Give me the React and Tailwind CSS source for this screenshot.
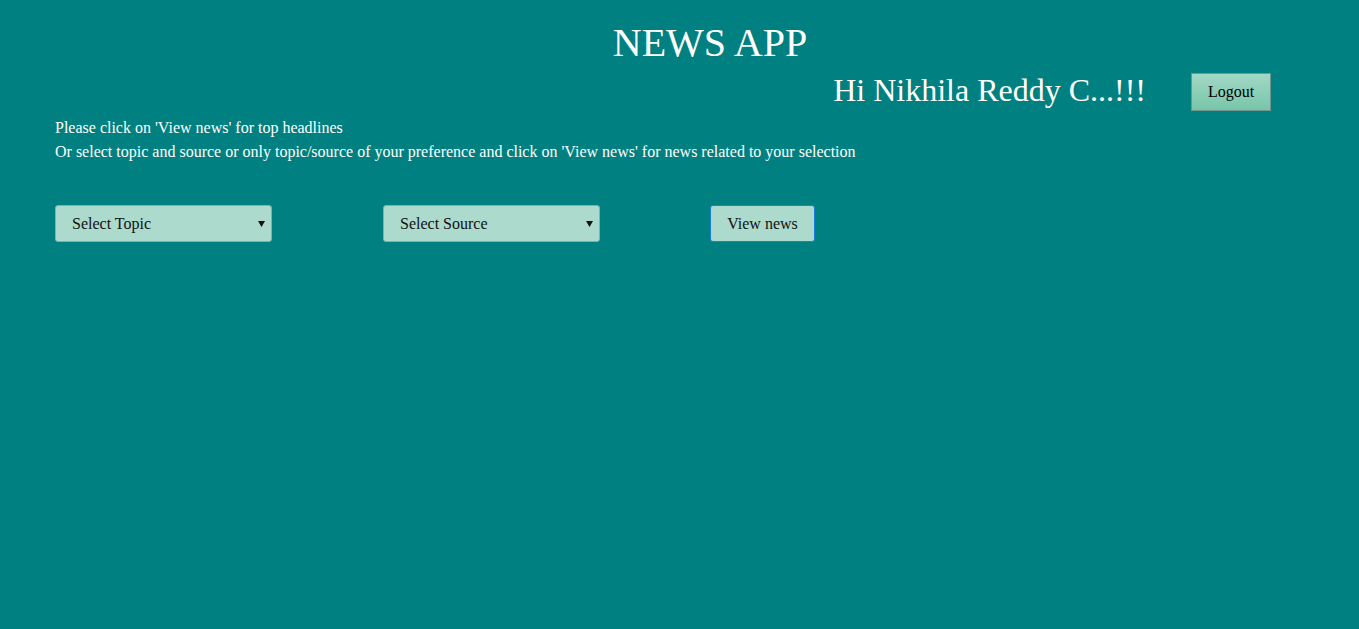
import React from 'react';

function Caret() {
  return (
    <svg width="7" height="6" viewBox="0 0 7 6" className="absolute right-[7px] top-1/2 -translate-y-1/2 pointer-events-none">
      <path d="M0 0 L7 0 L3.5 6 Z" fill="#111" />
    </svg>
  );
}

function Dropdown({ label }) {
  return (
    <div className="relative w-[217px] h-[37px]">
      <select className="appearance-none w-full h-full bg-[#acdacc] border border-[#7fb3a5] rounded-[3px] pl-[16px] pr-6 text-[16px] text-[#111] outline-none">
        <option>{label}</option>
      </select>
      <Caret />
    </div>
  );
}

export default function App() {
  return (
    <div className="min-h-[629px] w-full bg-[#008080] text-white font-['Liberation_Serif',serif]">
      <div className="pt-[20px] pl-[61px] text-center text-[40px] leading-[46px]">NEWS APP</div>

      <div className="mt-[7px] flex items-center justify-end gap-[45px] pr-[88px]">
        <span className="text-[32px] leading-[37px] -mt-[3px]">Hi Nikhila Reddy C...!!!</span>
        <button className="w-[80px] h-[38px] bg-gradient-to-b from-[#a2d8c5] to-[#77c5aa] border border-[#6f958c] text-[16px] text-black">
          Logout
        </button>
      </div>

      <div className="mt-[5px] pl-[55px] text-[16px] leading-[24px]">
        <p>Please click on 'View news' for top headlines</p>
        <p>Or select topic and source or only topic/source of your preference and click on 'View news' for news related to your selection</p>
      </div>

      <div className="mt-[41px] pl-[55px] flex items-center">
        <div className="mr-[111px]">
          <Dropdown label="Select Topic" />
        </div>
        <div className="mr-[110px]">
          <Dropdown label="Select Source" />
        </div>
        <button className="w-[105px] h-[37px] bg-[#acdacc] border border-[#1a7fe0] rounded-[3px] text-[16px] text-[#111]">
          View news
        </button>
      </div>
    </div>
  );
}
